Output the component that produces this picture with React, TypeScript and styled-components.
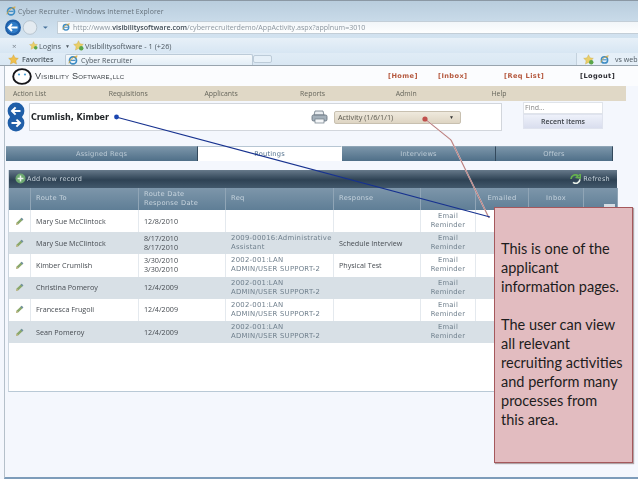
import React from "react";
import styled, { createGlobalStyle } from "styled-components";

const Global = createGlobalStyle`
  html, body { margin: 0; padding: 0; background: #fff; }
  * { box-sizing: border-box; }
`;

const Shot = styled.div`
  position: relative;
  width: 638px;
  height: 479px;
  overflow: hidden;
  font-family: "DejaVu Sans", sans-serif;
  background: #f4f7fd;
`;
const Soft = styled.div`
  display: flex;
  flex-direction: column;
  height: 479px;
  filter: blur(0.45px);
`;

/* ---------- browser chrome ---------- */
const Chrome = styled.header`
  height: 66px;
  flex: none;
  display: flex;
  flex-direction: column;
  border-top: 1px solid #8b98a4;
  border-bottom: 1px solid #98a4ae;
  background: linear-gradient(#b9cddd, #cfe0ee 45%, #dceaf6);
  font-family: "Open Sans", sans-serif;
  color: #5a6670;
`;
const TitleRow = styled.div`
  height: 18px;
  flex: none;
  display: flex;
  align-items: center;
  gap: 2px;
  padding: 2px 0 0 6px;
  font-size: 6.9px;
  letter-spacing: 0.1px;
  color: #66727c;
`;
const NavRow = styled.div`
  height: 16px;
  flex: none;
  display: flex;
  align-items: center;
  padding-left: 4px;
`;
const Address = styled.div`
  flex: 1;
  height: 13px;
  margin-left: 5px;
  display: flex;
  align-items: center;
  gap: 3px;
  padding-left: 4px;
  background: linear-gradient(#f2f6f9, #fdfefe);
  border: 1px solid #c3ced7;
  border-right: none;
  font-size: 7.1px;
  color: #8b969f;
  white-space: nowrap;
  b { color: #3f4b55; font-weight: 600; }
`;
const LinksRow = styled.div`
  height: 15px;
  flex: none;
  margin-top: 3px;
  display: flex;
  align-items: center;
  gap: 1px;
  padding-left: 12px;
  background: linear-gradient(#e7f0f8, #d7e6f3);
  font-size: 7.3px;
  color: #4d5861;
`;
const CloseMark = styled.span`
  width: 16px;
  font-size: 8px;
  color: #7d8790;
`;
const Caret = styled.span`
  width: 10px;
  font-size: 5px;
  padding-left: 3px;
`;
const TabsRow = styled.div`
  flex: 1;
  display: flex;
  align-items: stretch;
  padding-left: 8px;
  background: linear-gradient(#e0ecf6, #d9e7f3);
  font-size: 7.1px;
  color: #4d5861;
`;
const Favorites = styled.div`
  width: 57px;
  display: flex;
  align-items: center;
  gap: 3px;
  font-weight: 600;
`;
const PageTab = styled.div`
  width: 188px;
  display: flex;
  align-items: center;
  gap: 3px;
  padding-left: 2px;
  margin-top: 1px;
  background: linear-gradient(#f5f9fc, #e3eef7);
  border: 1px solid #bccbd8;
  border-bottom: none;
  border-radius: 2px 2px 0 0;
`;
const NewTab = styled.div`
  width: 19px;
  margin: 2px 0 2px 0;
  background: #e6f0f8;
  border: 1px solid #bccbd8;
  border-radius: 2px;
`;
const TabsEnd = styled.div`
  margin-left: auto;
  width: 62px;
  display: flex;
  align-items: center;
  gap: 6px;
  padding-left: 6px;
  background: #e5eff8;
  border-left: 1px solid #c4d2de;
`;

/* ---------- application page ---------- */
const Page = styled.main`
  flex: 1;
  display: flex;
  flex-direction: column;
  margin-left: 4px;
  border-left: 1px solid #b5c0ca;
  border-bottom: 2px solid #7d9cba;
  background: #f4f7fd;
`;
const Brand = styled.div`
  height: 20px;
  flex: none;
  display: flex;
  align-items: center;
  padding-left: 7px;
  background: #fbfcfe;
`;
const BrandName = styled.span`
  width: 100px;
  margin-left: 3px;
  font-family: "Liberation Sans", sans-serif;
  font-variant: small-caps;
  font-size: 9.1px;
  letter-spacing: 0.25px;
  color: #383d42;
  white-space: nowrap;
`;
const TopLinks = styled.nav`
  margin-left: 253px;
  display: grid;
  grid-template-columns: 50px 66px 76px auto;
  font-size: 6.6px;
  font-weight: 700;
  letter-spacing: 0.4px;
`;
const TopLink = styled.span<{ $dark?: boolean }>`
  color: ${(p) => (p.$dark ? "#2d2d33" : "#b5593f")};
`;
const Menu = styled.nav`
  height: 15px;
  flex: none;
  width: 621px;
  display: grid;
  grid-template-columns: repeat(6, 95.7px);
  align-items: center;
  padding-left: 8px;
  background: #e0d8c6;
  font-family: "Open Sans", sans-serif;
  font-size: 6.9px;
  color: #66665c;
`;
const ApplicantRow = styled.section`
  height: 30px;
  flex: none;
  margin-top: 1px;
  display: flex;
  align-items: flex-start;
  padding-left: 2px;
`;
const ApplicantBox = styled.div`
  width: 473px;
  height: 28px;
  margin: 1px 0 0 4px;
  display: flex;
  align-items: center;
  padding-left: 1px;
  background: #fff;
  border: 1px solid #d2d6dc;
`;
const ApplicantName = styled.strong`
  width: 280px;
  font-size: 8px;
  color: #25282b;
  white-space: nowrap;
`;
const ActivitySelect = styled.div`
  width: 127px;
  height: 13px;
  margin-left: 6px;
  display: flex;
  align-items: center;
  justify-content: space-between;
  padding: 0 6px 0 3px;
  background: linear-gradient(#efe9dd, #ded5c3);
  border: 1px solid #c8c0b0;
  border-radius: 2px;
  font-family: "Open Sans", sans-serif;
  font-size: 7.3px;
  color: #5c5a50;
`;
const SelectCaret = styled.span`
  font-size: 5px;
  color: #333;
`;
const FindBlock = styled.div`
  width: 80px;
  margin-left: 21px;
  display: flex;
  flex-direction: column;
`;
const FindInput = styled.div`
  height: 12px;
  padding-left: 1px;
  background: #fff;
  border: 1px solid #e0e4ea;
  font-family: "Open Sans", sans-serif;
  font-size: 7px;
  line-height: 10px;
  color: #888;
`;
const RecentButton = styled.div`
  height: 15px;
  display: flex;
  align-items: center;
  justify-content: center;
  background: linear-gradient(#eef1fa, #d9deee);
  border: 1px solid #dfe3ee;
  font-family: "Open Sans", sans-serif;
  font-size: 7px;
  font-weight: 600;
  color: #3c4148;
`;
const Tabs = styled.div`
  height: 15px;
  flex: none;
  width: 607px;
  margin: 14px 0 0 1px;
  display: grid;
  grid-template-columns: 192px 144px 154px 117px;
`;
const Tab = styled.div<{ $active?: boolean }>`
  display: flex;
  align-items: center;
  justify-content: center;
  font-size: 6.7px;
  letter-spacing: 0.2px;
  color: ${(p) => (p.$active ? "#51708c" : "#bccbd6")};
  background: ${(p) =>
    p.$active ? "#fff" : "linear-gradient(#7b95a9, #4f6f88)"};
  border-right: 1px solid ${(p) => (p.$active ? "#fff" : "#33495c")};
  border-top: 1px solid ${(p) => (p.$active ? "#b7c6d3" : "#8fa5b6")};
`;
const Grid = styled.section`
  width: 609px;
  height: 222px;
  flex: none;
  margin: 9px 0 0 3px;
  background: #fff;
  border-bottom: 1px solid #b9c9d6;
  border-left: 1px solid #ccd6df;
`;
const GridBar = styled.div`
  height: 17.5px;
  display: flex;
  align-items: center;
  padding: 0 7px 0 6px;
  background: linear-gradient(#66798a, #2e4254 55%, #42586b);
  font-size: 6.5px;
  letter-spacing: 0.3px;
  color: #c9d4dc;
`;
const BarLabel = styled.span`
  margin-left: 1px;
`;
const BarRight = styled.span`
  margin-left: auto;
  display: flex;
  align-items: center;
  gap: 2px;
`;
const columns = "22px 108px 87px 108px 87px 55px 53px 55px 34px";
const HeadRow = styled.div`
  height: 22.5px;
  display: grid;
  grid-template-columns: ${columns};
  background: linear-gradient(#7d96aa, #5f7e96);
`;
const HeadCell = styled.div<{ $center?: boolean }>`
  position: relative;
  display: flex;
  align-items: center;
  justify-content: ${(p) => (p.$center ? "center" : "flex-start")};
  padding-left: ${(p) => (p.$center ? "0" : "5px")};
  border-right: 1px solid #90a5b6;
  font-size: 6.7px;
  line-height: 9px;
  letter-spacing: 0.3px;
  color: #c6d3dd;
`;
const ScrollStub = styled.span`
  position: absolute;
  right: 2px;
  bottom: 0;
  width: 11px;
  height: 6px;
  background: #d5dde4;
`;
const Row = styled.div<{ $alt?: boolean }>`
  height: 22.2px;
  display: grid;
  grid-template-columns: ${columns};
  background: ${(p) => (p.$alt ? "#d8e0e6" : "#fff")};
`;
const Cell = styled.div<{ $kind?: "name" | "req" | "mail" | "icon"; $alt?: boolean }>`
  display: flex;
  flex-direction: column;
  justify-content: center;
  align-items: ${(p) =>
    p.$kind === "mail" || p.$kind === "icon" ? "center" : "flex-start"};
  padding-left: ${(p) =>
    p.$kind === "mail" || p.$kind === "icon" ? "0" : "5px"};
  border-right: 1px solid ${(p) => (p.$alt ? "#d8e0e6" : "#e4e9ee")};
  font-family: ${(p) =>
    p.$kind === "req" || p.$kind === "mail"
      ? '"DejaVu Sans", sans-serif'
      : '"Open Sans", sans-serif'};
  font-size: ${(p) =>
    p.$kind === "req" ? "6.9px" : p.$kind === "mail" ? "6.8px" : "7.2px"};
  line-height: 9px;
  letter-spacing: ${(p) =>
    p.$kind === "req" || p.$kind === "mail" ? "0.25px" : "0"};
  color: ${(p) =>
    p.$kind === "req" || p.$kind === "mail" ? "#6f7f8c" : "#474c52"};
  white-space: nowrap;
  overflow: hidden;
`;

/* ---------- annotation ---------- */
const Connectors = styled.svg`
  position: absolute;
  inset: 0;
  pointer-events: none;
`;
const Callout = styled.aside`
  position: absolute;
  left: 494px;
  top: 207px;
  width: 139px;
  height: 256px;
  padding: 31px 4px 0 6px;
  background: #e2bcc0;
  border: 1px solid #a5585c;
  box-shadow: 1px 1px 1px rgba(90, 60, 60, 0.45);
  font-family: "Lato", "Open Sans", sans-serif;
  font-size: 14.5px;
  line-height: 19px;
  color: #1d1c1d;
`;
const CalloutPara = styled.p`
  margin: 0 0 19px;
`;

/* ---------- drawings ---------- */
const IeIcon = ({ s = 10 }: { s?: number }) => (
  <svg width={s} height={s} viewBox="0 0 12 12">
    <circle cx="6" cy="6.5" r="4.2" fill="none" stroke="#3d8cc4" strokeWidth="2" />
    <path d="M3 6.4h6" stroke="#3d8cc4" strokeWidth="1.4" />
    <path d="M1 10c1-4 5-8 10-9-1 1-1 2-1.4 3" fill="none" stroke="#e0a52c" strokeWidth="1" />
  </svg>
);
const StarIcon = ({ s = 11 }: { s?: number }) => (
  <svg width={s} height={s} viewBox="0 0 12 12">
    <path d="M6 .8l1.6 3.4 3.7.5-2.7 2.6.7 3.7L6 9.2 2.7 11l.7-3.7L.7 4.7l3.7-.5z" fill="#efc04e" stroke="#c99a35" strokeWidth=".4" />
  </svg>
);
const PageStar = ({ s = 11 }: { s?: number }) => (
  <svg width={s} height={s} viewBox="0 0 12 12">
    <path d="M6 .8l1.6 3.4 3.7.5-2.7 2.6.7 3.7L6 9.2 2.7 11l.7-3.7L.7 4.7l3.7-.5z" fill="#e9cf6a" stroke="#c9a640" strokeWidth=".4" />
    <circle cx="9" cy="9" r="2.4" fill="#5aa64a" />
  </svg>
);
const BackForward = () => (
  <svg width="48" height="17" viewBox="0 0 48 17">
    <circle cx="9" cy="8.5" r="8" fill="#1f5fa8" />
    <circle cx="9" cy="8.5" r="5.8" fill="#2f7cc8" />
    <path d="M13.5 8.5H5M8 5L4.6 8.5 8 12" fill="none" stroke="#fff" strokeWidth="1.8" />
    <circle cx="26" cy="8.5" r="6.8" fill="#e4ebf1" stroke="#aab7c2" strokeWidth=".7" />
    <path d="M39 7.4l2.4 2.4 2.4-2.4z" fill="#47719a" />
  </svg>
);
const Logo = () => (
  <svg width="20" height="17" viewBox="0 0 20 17">
    <ellipse cx="10" cy="8.5" rx="8.8" ry="7.4" fill="#fff" stroke="#16161a" strokeWidth="1.9" />
    <circle cx="7" cy="6.5" r="1.1" fill="#4aa0d8" />
    <circle cx="13" cy="6.5" r="1.1" fill="#4aa0d8" />
  </svg>
);
const PrevNext = () => (
  <svg width="18" height="30" viewBox="0 0 18 30">
    <circle cx="9" cy="21" r="8.4" fill="#1f5ea8" />
    <path d="M4.5 21h8M9.4 17.4L13 21l-3.6 3.6" fill="none" stroke="#fff" strokeWidth="2" />
    <circle cx="9" cy="9" r="8.4" fill="#1f5ea8" />
    <path d="M13.5 9h-8M8.6 5.4L5 9l3.6 3.6" fill="none" stroke="#fff" strokeWidth="2" />
  </svg>
);
const Printer = () => (
  <svg width="17" height="14" viewBox="0 0 17 14">
    <path d="M4 1h8l1 4H3z" fill="#e9edf0" stroke="#6c7a85" strokeWidth=".8" />
    <rect x="1" y="5" width="15" height="6" rx="1.5" fill="#a4b0ba" stroke="#5f6d78" strokeWidth=".8" />
    <rect x="4" y="9" width="9" height="4" fill="#f4f6f8" stroke="#6c7a85" strokeWidth=".7" />
  </svg>
);
const AddIcon = () => (
  <svg width="11" height="11" viewBox="0 0 11 11">
    <circle cx="5.5" cy="5.5" r="5" fill="#6da871" />
    <path d="M5.5 2.6v5.8M2.6 5.5h5.8" stroke="#eef6ee" strokeWidth="1.5" />
  </svg>
);
const RefreshIcon = () => (
  <svg width="11" height="10" viewBox="0 0 11 10">
    <path d="M1 5a4.4 4.4 0 0 1 7-3.3L6.6 3.4 10.4 4V.4L9.2 1.4" fill="none" stroke="#65b04f" strokeWidth="1.7" />
    <path d="M10 5.4a4.4 4.4 0 0 1-7 3" fill="none" stroke="#e8f0e8" strokeWidth="1.7" />
  </svg>
);
const Pencil = () => (
  <svg width="9" height="9" viewBox="0 0 9 9">
    <path d="M1 8l.7-2.4L6.6.8l1.7 1.6L3.4 7.3z" fill="#8aa86a" />
    <path d="M5.6 1.8L6.6.8l1.7 1.6-1 1z" fill="#6f8fa8" />
    <path d="M1 8l.7-2.4 1.7 1.7z" fill="#c9b88a" />
  </svg>
);

type RowData = { name: string; dates: string[]; req?: string[]; response?: string };
const rows: RowData[] = [
  { name: "Mary Sue McClintock", dates: ["12/8/2010"] },
  {
    name: "Mary Sue McClintock",
    dates: ["8/17/2010", "8/17/2010"],
    req: ["2009-00016:Administrative", "Assistant"],
    response: "Schedule Interview",
  },
  {
    name: "Kimber Crumlish",
    dates: ["3/30/2010", "3/30/2010"],
    req: ["2002-001:LAN", "ADMIN/USER SUPPORT-2"],
    response: "Physical Test",
  },
  { name: "Christina Pomeroy", dates: ["12/4/2009"], req: ["2002-001:LAN", "ADMIN/USER SUPPORT-2"] },
  { name: "Francesca Frugoli", dates: ["12/4/2009"], req: ["2002-001:LAN", "ADMIN/USER SUPPORT-2"] },
  { name: "Sean Pomeroy", dates: ["12/4/2009"], req: ["2002-001:LAN", "ADMIN/USER SUPPORT-2"] },
];

const lines = (items: string[] = []) => items.map((t, i) => <span key={i}>{t}</span>);

export default function App() {
  return (
    <Shot>
      <Global />
      <Soft>
        <Chrome>
          <TitleRow>
            <IeIcon />
            <span>Cyber Recruiter - Windows Internet Explorer</span>
          </TitleRow>
          <NavRow>
            <BackForward />
            <Address>
              <IeIcon s={8} />
              <span>
                http://www.<b>visibilitysoftware.com</b>/cyberrecruiterdemo/AppActivity.aspx?applnum=3010
              </span>
            </Address>
          </NavRow>
          <LinksRow>
            <CloseMark>×</CloseMark>
            <PageStar s={9} />
            <span>Logins</span>
            <Caret>▼</Caret>
            <PageStar />
            <span>Visibilitysoftware - 1 (+26)</span>
          </LinksRow>
          <TabsRow>
            <Favorites>
              <StarIcon />
              <span>Favorites</span>
            </Favorites>
            <PageTab>
              <IeIcon />
              <span>Cyber Recruiter</span>
            </PageTab>
            <NewTab />
            <TabsEnd>
              <PageStar />
              <IeIcon s={9} />
              <span>vs web</span>
            </TabsEnd>
          </TabsRow>
        </Chrome>
        <Page>
          <Brand>
            <Logo />
            <BrandName>Visibility Software,llc</BrandName>
            <TopLinks>
              <TopLink>[Home]</TopLink>
              <TopLink>[Inbox]</TopLink>
              <TopLink>[Req List]</TopLink>
              <TopLink $dark>[Logout]</TopLink>
            </TopLinks>
          </Brand>
          <Menu>
            <span>Action List</span>
            <span>Requisitions</span>
            <span>Applicants</span>
            <span>Reports</span>
            <span>Admin</span>
            <span>Help</span>
          </Menu>
          <ApplicantRow>
            <PrevNext />
            <ApplicantBox>
              <ApplicantName>Crumlish, Kimber</ApplicantName>
              <Printer />
              <ActivitySelect>
                <span>Activity (1/6/1/1)</span>
                <SelectCaret>▼</SelectCaret>
              </ActivitySelect>
            </ApplicantBox>
            <FindBlock>
              <FindInput>Find...</FindInput>
              <RecentButton>Recent Items</RecentButton>
            </FindBlock>
          </ApplicantRow>
          <Tabs>
            <Tab>Assigned Reqs</Tab>
            <Tab $active>Routings</Tab>
            <Tab>Interviews</Tab>
            <Tab>Offers</Tab>
          </Tabs>
          <Grid>
            <GridBar>
              <AddIcon />
              <BarLabel>Add new record</BarLabel>
              <BarRight>
                <RefreshIcon />
                Refresh
              </BarRight>
            </GridBar>
            <HeadRow>
              <HeadCell />
              <HeadCell>Route To</HeadCell>
              <HeadCell>
                Route Date
                <br />
                Response Date
              </HeadCell>
              <HeadCell>Req</HeadCell>
              <HeadCell>Response</HeadCell>
              <HeadCell />
              <HeadCell $center>Emailed</HeadCell>
              <HeadCell $center>Inbox</HeadCell>
              <HeadCell>
                <ScrollStub />
              </HeadCell>
            </HeadRow>
            {rows.map((r, i) => {
              const alt = i % 2 === 1;
              return (
                <Row key={i} $alt={alt}>
                  <Cell $kind="icon" $alt={alt}>
                    <Pencil />
                  </Cell>
                  <Cell $alt={alt}>{r.name}</Cell>
                  <Cell $alt={alt}>{lines(r.dates)}</Cell>
                  <Cell $kind="req" $alt={alt}>
                    {lines(r.req)}
                  </Cell>
                  <Cell $alt={alt}>{r.response}</Cell>
                  <Cell $kind="mail" $alt={alt}>
                    <span>Email</span>
                    <span>Reminder</span>
                  </Cell>
                  <Cell $alt={alt} />
                  <Cell $alt={alt} />
                  <Cell $alt={alt} />
                </Row>
              );
            })}
          </Grid>
        </Page>
      </Soft>
      <Connectors width="638" height="479" viewBox="0 0 638 479">
        <polyline points="425,119 451,140 489,218" fill="none" stroke="#e4d0d0" strokeWidth="1.6" />
        <polyline points="425,119 451,140 489,218" fill="none" stroke="#a85a5c" strokeWidth="0.7" />
        <circle cx="425" cy="119" r="2.6" fill="#c0504d" />
        <line x1="116" y1="117" x2="490" y2="217" stroke="#17328f" strokeWidth="1.1" />
        <circle cx="116.5" cy="117" r="2.4" fill="#1a46b0" />
      </Connectors>
      <Callout>
        <CalloutPara>
          This is one of the
          <br />
          applicant
          <br />
          information pages.
        </CalloutPara>
        <CalloutPara>
          The user can view
          <br />
          all relevant
          <br />
          recruiting activities
          <br />
          and perform many
          <br />
          processes from
          <br />
          this area.
        </CalloutPara>
      </Callout>
    </Shot>
  );
}
